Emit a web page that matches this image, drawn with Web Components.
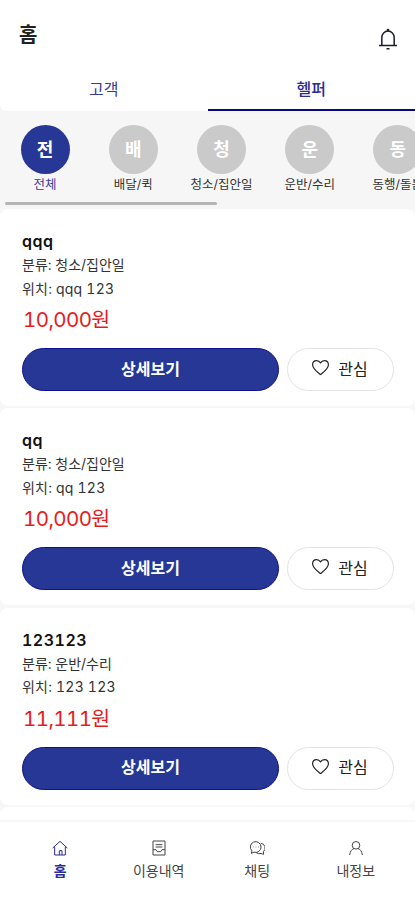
<!DOCTYPE html>
<html lang="ko">
<head>
<meta charset="UTF-8">
<meta name="viewport" content="width=device-width, initial-scale=1">
<title>홈</title>
<style>
  body {
    margin: 0;
    font-family: Inter, "Noto Sans CJK KR", sans-serif;
    font-variant-numeric: tabular-nums;
    color: #222;
    --primary: #263795;
    --navy: #08087f;
    --page-bg: #f6f6f6;
  }
</style>
</head>
<body>
<home-page></home-page>

<script>
const ICONS = {
  bell: '<path d="M3 18.500h18M5.800 18.500V10.500a6.200 6.500 0 0 1 12.400 0v8M12 4V2M10.500 21.800h3"/><circle cx="12" cy="3" r=".6"/>',
  heart: '<path d="M12 21C8 17.6 2 13.5 2 8.4 2 5.4 4.2 3.2 7 3.2c2.2 0 4 1.2 5 3 1-1.8 2.8-3 5-3 2.8 0 5 2.2 5 5.2 0 5.1-6 9.2-10 12.6z"/>',
  home: '<path d="M1 12 12 2l11 10M4 10v12.500h16V10M11 22.500v-6.500h4v6.500"/>',
  list: '<path d="M3 1.500h18v21H3zM7 7h10M7 10.500h10M3 14.500h4.500l2 3h5l2-3H21"/>',
  chat: '<path d="M18 10.500a8 8 0 1 0-13.500 5.800L3.500 20l4-1.700a8 8 0 0 0 10.500-7.800zM17.500 5a7 7 0 0 1 4 12.500l.5 4-4-1.300a8 8 0 0 1-7.500-1.500M6.500 10.500h.8M10 10.500h.8M13.500 10.500h.8"/>',
  user: '<circle cx="12" cy="8" r="5.700"/><path d="M2.500 22.500c.8-5.500 3-8.500 6.500-9.800M21.500 22.500c-.8-5.500-3-8.500-6.500-9.800"/>',
};

class AppIcon extends HTMLElement {
  connectedCallback() {
    this.attachShadow({ mode: 'open' }).innerHTML = `
      <style>
        :host { display: block; width: 16px; height: 16px; }
        svg {
          display: block;
          width: 100%;
          height: 100%;
          fill: none;
          stroke: currentColor;
          stroke-width: 1.5;
          stroke-linejoin: round;
        }
      </style>
      <svg viewBox="0 0 24 24">${ICONS[this.getAttribute('name')]}</svg>
    `;
  }
}

class PageHeader extends HTMLElement {
  connectedCallback() {
    this.attachShadow({ mode: 'open' }).innerHTML = `
      <style>
        :host {
          display: flex;
          justify-content: space-between;
          height: 68px;
          padding: 0 15px 0 19px;
          box-sizing: border-box;
          background: #fff;
        }
        h1 { margin: 0; font-size: 20px; font-weight: 600; line-height: 70px; }
        app-icon { width: 24px; height: 24px; margin-top: 27px; color: #1b2029; }
      </style>
      <h1><slot></slot></h1>
      <app-icon name="bell"></app-icon>
    `;
  }
}

class TabItem extends HTMLElement {
  connectedCallback() {
    this.attachShadow({ mode: 'open' }).innerHTML = `
      <style>
        :host {
          display: block;
          flex: 1;
          box-sizing: border-box;
          height: 43px;
          border-bottom: 2px solid transparent;
          color: #3a3a98;
          font-size: 16px;
          line-height: 42px;
          text-align: center;
        }
        :host([active]) { border-color: var(--navy); font-weight: 500; color: #2b2b94; }
      </style>
      <slot></slot>
    `;
  }
}

class TabBar extends HTMLElement {
  connectedCallback() {
    this.attachShadow({ mode: 'open' }).innerHTML = `
      <style>
        :host { display: flex; background: #fff; border-radius: 0 0 6px 6px; }
      </style>
      <slot></slot>
    `;
  }
}

class CategoryItem extends HTMLElement {
  connectedCallback() {
    const label = this.getAttribute('label');
    this.attachShadow({ mode: 'open' }).innerHTML = `
      <style>
        :host { display: block; flex: none; width: 88.200px; text-align: center; color: #333; }
        .circle {
          width: 49px;
          height: 49px;
          margin: 0 auto;
          border-radius: 50%;
          background: #cacaca;
          color: #fff;
          font-size: 18px;
          font-weight: 600;
          line-height: 49px;
        }
        .label { font-size: 12.500px; line-height: 21px; white-space: nowrap; }
        :host([active]) .circle { background: var(--primary); }
        :host([active]) .label { color: #3a3a98; }
      </style>
      <div class="circle">${label[0]}</div>
      <div class="label">${label}</div>
    `;
  }
}

class CategoryList extends HTMLElement {
  connectedCallback() {
    this.attachShadow({ mode: 'open' }).innerHTML = `
      <style>
        :host { display: block; height: 98px; overflow: hidden; }
        .items { display: flex; height: 77px; padding: 14px 0 0 1px; }
        .thumb { width: 212px; height: 3px; margin-left: 5px; border-radius: 2px; background: #b5b5b5; }
      </style>
      <div class="items"><slot></slot></div>
      <div class="thumb"></div>
    `;
  }
}

class PillButton extends HTMLElement {
  connectedCallback() {
    this.attachShadow({ mode: 'open' }).innerHTML = `
      <style>
        :host { display: block; }
        button {
          display: flex;
          align-items: center;
          justify-content: center;
          gap: 8px;
          width: 100%;
          height: 43px;
          padding: 0 2px 4px 0;
          border: 1px solid #e3e3e3;
          border-radius: 22px;
          background: #fff;
          color: #222;
          font: inherit;
          font-size: 16px;
        }
        :host([primary]) button {
          padding-right: 0;
          border-color: #10108a;
          background: var(--primary);
          color: #fff;
          font-weight: 600;
        }
      </style>
      <button><slot></slot></button>
    `;
  }
}

class JobCard extends HTMLElement {
  connectedCallback() {
    const { name, category, place, price } = this.dataset;
    this.attachShadow({ mode: 'open' }).innerHTML = `
      <style>
        :host {
          display: block;
          box-sizing: border-box;
          flex: none;
          height: 197px;
          padding: 21px 21px 0 22px;
          border-radius: 8px;
          background: #fff;
        }
        h2 { margin: 0; font-size: 16px; font-weight: 600; line-height: 23px; letter-spacing: .5px; color: #111; }
        p { margin: 0; font-size: 14px; line-height: 23.500px; color: #333; }
        .place { letter-spacing: .2px; }
        .price {
          height: 48px;
          padding-left: 1px;
          font-size: 20.500px;
          line-height: 40px;
          letter-spacing: -.6px;
          color: #e51c1c;
        }
        .actions { display: grid; grid-template-columns: 257px 1fr; gap: 8px; }
        app-icon { width: 19px; height: 19px; }
      </style>
      <h2>${name}</h2>
      <p>분류: ${category}</p>
      <p class="place">위치: ${place}</p>
      <p class="price">${price}원</p>
      <div class="actions">
        <pill-button primary>상세보기</pill-button>
        <pill-button><app-icon name="heart"></app-icon>관심</pill-button>
      </div>
    `;
  }
}

// top edge of the next card, cut off by the nav bar
class JobCardBlank extends HTMLElement {
  connectedCallback() {
    this.attachShadow({ mode: 'open' }).innerHTML = `
      <style>
        :host { display: block; flex: none; height: 197px; border-radius: 8px; background: #fff; }
      </style>
    `;
  }
}

class NavItem extends HTMLElement {
  connectedCallback() {
    this.attachShadow({ mode: 'open' }).innerHTML = `
      <style>
        :host {
          display: flex;
          flex-direction: column;
          align-items: center;
          flex: 1;
          color: #444;
          font-size: 14px;
          line-height: 30px;
        }
        :host([active]) { color: #2b2b94; font-weight: 700; }
      </style>
      <app-icon name="${this.getAttribute('icon')}"></app-icon>
      <slot></slot>
    `;
  }
}

class BottomNav extends HTMLElement {
  connectedCallback() {
    this.attachShadow({ mode: 'open' }).innerHTML = `
      <style>
        :host {
          display: flex;
          flex: none;
          box-sizing: border-box;
          height: 80px;
          padding: 18px 10px 0 11px;
          border-top: 2px solid #f8f8f8;
          background: #fff;
        }
      </style>
      <slot></slot>
    `;
  }
}

class HomePage extends HTMLElement {
  connectedCallback() {
    this.attachShadow({ mode: 'open' }).innerHTML = `
      <style>
        :host {
          display: flex;
          flex-direction: column;
          height: 900px;
          overflow: hidden;
          background: var(--page-bg);
        }
        .cards {
          display: flex;
          flex-direction: column;
          flex: 1;
          gap: 2.400px;
          min-height: 0;
          overflow: hidden;
          background: #f7f7f7;
        }
      </style>
      <page-header>홈</page-header>
      <tab-bar>
        <tab-item>고객</tab-item>
        <tab-item active>헬퍼</tab-item>
      </tab-bar>
      <category-list>
        <category-item label="전체" active></category-item>
        <category-item label="배달/퀵"></category-item>
        <category-item label="청소/집안일"></category-item>
        <category-item label="운반/수리"></category-item>
        <category-item label="동행/돌봄"></category-item>
      </category-list>
      <div class="cards">
        <job-card data-name="qqq" data-category="청소/집안일" data-place="qqq 123" data-price="10,000"></job-card>
        <job-card data-name="qq" data-category="청소/집안일" data-place="qq 123" data-price="10,000"></job-card>
        <job-card data-name="123123" data-category="운반/수리" data-place="123 123" data-price="11,111"></job-card>
        <job-card-blank></job-card-blank>
      </div>
      <bottom-nav>
        <nav-item icon="home" active>홈</nav-item>
        <nav-item icon="list">이용내역</nav-item>
        <nav-item icon="chat">채팅</nav-item>
        <nav-item icon="user">내정보</nav-item>
      </bottom-nav>
    `;
  }
}

customElements.define('app-icon', AppIcon);
customElements.define('page-header', PageHeader);
customElements.define('tab-item', TabItem);
customElements.define('tab-bar', TabBar);
customElements.define('category-item', CategoryItem);
customElements.define('category-list', CategoryList);
customElements.define('pill-button', PillButton);
customElements.define('job-card', JobCard);
customElements.define('job-card-blank', JobCardBlank);
customElements.define('nav-item', NavItem);
customElements.define('bottom-nav', BottomNav);
customElements.define('home-page', HomePage);
</script>
</body>
</html>
